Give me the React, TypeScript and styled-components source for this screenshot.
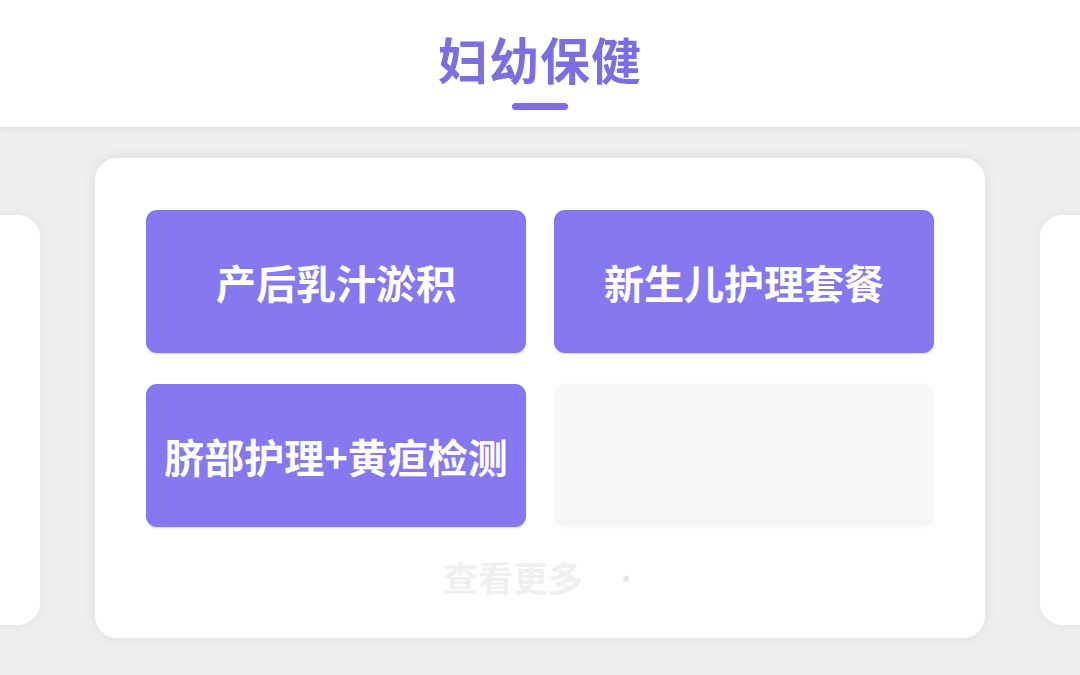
import styled, { createGlobalStyle } from "styled-components";

const GlobalStyle = createGlobalStyle`
  html, body {
    margin: 0;
    padding: 0;
    background: #efefef;
    font-family: "Noto Sans CJK SC", "Noto Sans", sans-serif;
  }
  #root {
    width: 1080px;
    height: 675px;
    overflow: hidden;
  }
`;

const items = ["产后乳汁淤积", "新生儿护理套餐", "脐部护理+黄疸检测"];

const App = () => {
  return (
    <>
      <GlobalStyle />
      <Page>
        <Header>
          <Title>妇幼保健</Title>
          <TitleBar />
        </Header>
        <Carousel>
          <PeekCard />
          <MainCard>
            <Grid>
              {items.map((label) => (
                <ServiceButton key={label}>{label}</ServiceButton>
              ))}
              <EmptyCell />
            </Grid>
            <MoreRow>
              <MoreText>查看更多</MoreText>
              <MoreDot>·</MoreDot>
            </MoreRow>
          </MainCard>
          <PeekCard />
        </Carousel>
      </Page>
    </>
  );
};

export default App;

const Page = styled.div`
  width: 1080px;
  height: 675px;
  display: flex;
  flex-direction: column;
  background: #efefef;
`;

const Header = styled.header`
  height: 127px;
  background: #fff;
  display: flex;
  flex-direction: column;
  align-items: center;
  border-bottom: 2px solid #e4e4e4;
  box-shadow: 0 2px 4px rgba(0, 0, 0, 0.05);
  flex-shrink: 0;
`;

const Title = styled.h1`
  margin: 25px 0 0;
  font-size: 50px;
  line-height: 66px;
  font-weight: 700;
  color: #7b6ee0;
  letter-spacing: 1px;
`;

const TitleBar = styled.div`
  margin-top: 12px;
  width: 56px;
  height: 7px;
  border-radius: 4px;
  background: #7b6ee0;
`;

const Carousel = styled.div`
  flex: 1;
  display: flex;
  justify-content: center;
  align-items: flex-start;
  gap: 55px;
  padding-top: 29px;
  overflow: hidden;
`;

const PeekCard = styled.div`
  flex: 0 0 300px;
  height: 410px;
  margin-top: 57px;
  background: #fff;
  border-radius: 22px;
  box-shadow: 0 0 14px rgba(0, 0, 0, 0.06);
`;

const MainCard = styled.div`
  flex: 0 0 890px;
  height: 480px;
  box-sizing: border-box;
  padding: 52px 51px 0;
  background: #fff;
  border-radius: 22px;
  box-shadow: 0 0 16px rgba(0, 0, 0, 0.08);
  display: flex;
  flex-direction: column;
`;

const Grid = styled.div`
  display: grid;
  grid-template-columns: 380px 380px;
  grid-auto-rows: 143px;
  column-gap: 28px;
  row-gap: 31px;
`;

const ServiceButton = styled.div`
  background: #8678f1;
  border-radius: 11px;
  display: flex;
  align-items: center;
  justify-content: center;
  color: #fff;
  font-size: 40px;
  font-weight: 700;
  box-shadow: 0 1px 2px rgba(90, 80, 180, 0.25);
`;

const EmptyCell = styled.div`
  background: #f7f7f6;
  border-radius: 11px;
  box-shadow: 0 0 6px rgba(0, 0, 0, 0.02);
`;

const MoreRow = styled.div`
  margin-top: 24px;
  display: flex;
  align-items: center;
  justify-content: center;
  gap: 28px;
  padding-left: 4px;
`;

const MoreText = styled.span`
  font-size: 35px;
  font-weight: 700;
  color: #f0f0f0;
`;

const MoreDot = styled.span`
  font-size: 30px;
  color: #e8e8e8;
`;
